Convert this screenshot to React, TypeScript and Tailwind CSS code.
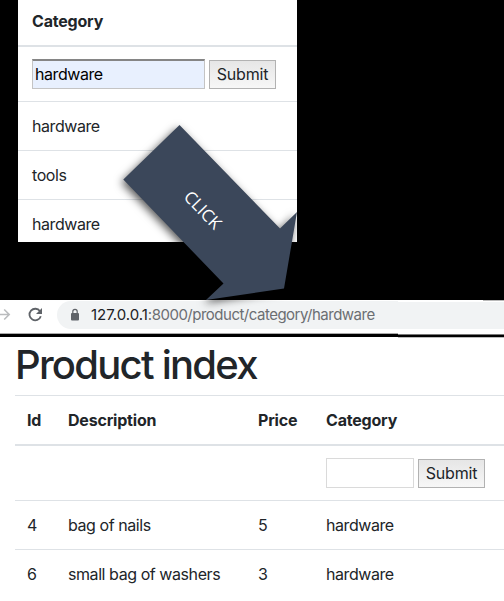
import React from "react";

const text = "font-['Inter','Liberation_Sans',sans-serif] text-[16px] leading-6 text-[#212529]";

function SubmitButton() {
  return (
    <button className="mt-px ml-1 h-[29px] w-[67px] border border-[#b2b2b2] bg-linear-to-b from-[#e6e6e6] to-[#f7f7f7] text-center leading-[25px] tracking-[-0.15px] text-[#212529]">
      Submit
    </button>
  );
}

function CategoryPanel() {
  return (
    <section className="ml-[18px] h-[242px] w-[279px] overflow-hidden bg-white tracking-[-0.43px]">
      <div className="flex h-[47px] items-center border-b-2 border-[#dee2e6] pl-[14px] pb-[3px] font-bold tracking-[-0.2px]">
        Category
      </div>
      <div className="flex h-[55px] items-center border-b border-[#dee2e6] pl-[14px]">
        <input
          defaultValue="hardware"
          className="h-[30px] w-[173px] border border-t-2 border-[#c4c4c4] border-t-[#858585] bg-[#e8f0fe] px-[2px] pb-[2px] text-black outline-none"
        />
        <SubmitButton />
      </div>
      {["hardware", "tools", "hardware"].map((name, i) => (
        <div key={i} className="flex h-[49px] items-center border-b border-[#dee2e6] pl-[14px] pb-[1px]">
          {name}
        </div>
      ))}
    </section>
  );
}

function AddressBar() {
  return (
    <section className="mt-[58px]">
      <div className="flex h-[33px] items-start bg-white">
        <svg className="h-[33px] w-[57px] shrink-0" viewBox="0 0 57 33" fill="none">
          <path d="M0 14.5H9M4.2 9.5L9.2 14.5L4.2 19.5" stroke="#babcbe" strokeWidth="1.6" />
          <path d="M40 11.2A5.8 5.8 0 1 0 40.8 16.3" stroke="#5f6368" strokeWidth="1.8" />
          <path d="M42 8V14H36Z" fill="#5f6368" />
        </svg>
        <div className="mt-[1px] flex h-7 w-[341px] items-center rounded-l-full bg-[#f1f3f4] pl-[12.5px]">
          <svg className="mr-[11.5px] h-[14px] w-[10px] shrink-0" viewBox="0 0 10 14">
            <rect x="1" y="5" width="8" height="7.5" rx="1" fill="#5f6368" />
            <path d="M2.8 5V3.6a2.2 2.2 0 0 1 4.4 0V5" fill="none" stroke="#5f6368" strokeWidth="1.2" />
          </svg>
          <span className="pb-px text-[15px] tracking-[-0.5px] whitespace-nowrap text-[#6b6e72]">
            <span className="tracking-[-0.02px] text-[#202124]">127.0.0.1</span>:8000/product/category/hardware
          </span>
        </div>
        <div className="flex-1">
          <div className="ml-[85px] h-px bg-[#b8b8b8]" />
          <div className="mt-[1px] h-[27px] bg-[#f1f3f4]" />
        </div>
      </div>
      <div className="flex h-[5px]">
        <div className="w-[398px] border-t border-b border-t-[#aaa] border-b-white" />
        <div className="flex-1 border-t border-b border-t-white border-b-[#bbb]">
          <div className="h-px bg-[#777]" />
        </div>
      </div>
    </section>
  );
}

const columns = "grid grid-cols-[41px_190px_68px_1fr] items-center pl-3";

function ProductIndex() {
  return (
    <section className="h-[263px] overflow-hidden bg-white pl-[15px] tracking-[-0.43px]">
      <h1 className="h-[57px] pt-[3px] text-[40px] leading-[48px] font-medium tracking-[-1.75px]">Product index</h1>
      <div className={`${columns} h-[51px] border-t border-b-2 border-[#dee2e6] font-bold tracking-[-0.2px]`}>
        <span>Id</span>
        <span>Description</span>
        <span>Price</span>
        <span>Category</span>
      </div>
      <div className={`${columns} h-[55px] border-b border-[#dee2e6]`}>
        <div className="col-start-4 flex items-center">
          <input className="h-[30px] w-[88px] border border-[#dadada] bg-white px-[2px] outline-none" />
          <SubmitButton />
        </div>
      </div>
      {[
        ["4", "bag of nails", "5", "hardware"],
        ["6", "small bag of washers", "3", "hardware"],
      ].map((row) => (
        <div key={row[0]} className={`${columns} h-[49px] border-b border-[#dee2e6] pb-[1px] last:border-white`}>
          {row.map((cell, i) => (
            <span key={i}>{cell}</span>
          ))}
        </div>
      ))}
    </section>
  );
}

function ClickArrow() {
  return (
    <svg className="pointer-events-none absolute top-[110px] left-[110px] h-[205px] w-[200px]" viewBox="110 110 200 205">
      <polygon
        className="drop-shadow-[-2px_3px_4px_rgba(0,0,0,0.65)]"
        points="179.5,125 280,228.5 297,212 284,288.5 206,300 223.5,283.5 123.3,179.5"
        fill="#3b475a"
      />
      <text
        x="202.8"
        y="210"
        dy="6"
        transform="rotate(46 202.8 210)"
        textAnchor="middle"
        fill="white"
        className="font-['Open_Sans',sans-serif] text-[17px]"
      >
        CLICK
      </text>
    </svg>
  );
}

export default function App() {
  return (
    <main className={`relative h-[601px] w-[504px] overflow-hidden bg-black ${text}`}>
      <CategoryPanel />
      <AddressBar />
      <ProductIndex />
      <ClickArrow />
    </main>
  );
}
